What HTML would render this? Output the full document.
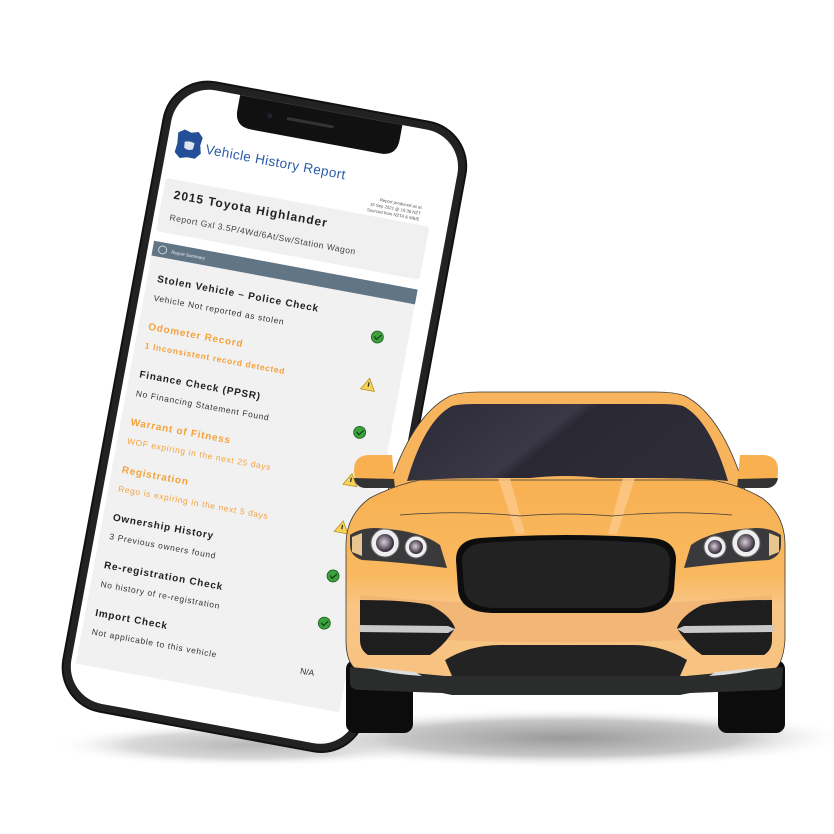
<!DOCTYPE html>
<html><head><meta charset="utf-8"><style>
html,body{margin:0;padding:0;background:#fff;}
svg{display:block;}
text{font-family:"Liberation Sans",Arial,sans-serif;}
</style></head><body>
<svg width="834" height="834" viewBox="0 0 834 834" xmlns="http://www.w3.org/2000/svg">
<defs>
<radialGradient id="sh" cx="0.5" cy="0.5" r="0.5">
<stop offset="0" stop-color="#9a9a9a"/><stop offset="0.6" stop-color="#c8c8c8"/><stop offset="1" stop-color="#fff" stop-opacity="0"/>
</radialGradient>
<linearGradient id="ws" x1="0" y1="0" x2="1" y2="0.3">
<stop offset="0" stop-color="#2b2934"/><stop offset="0.5" stop-color="#3a3846"/><stop offset="0.55" stop-color="#2a2832"/><stop offset="1" stop-color="#2e2c37"/>
</linearGradient>
<linearGradient id="body" x1="0" y1="0" x2="0" y2="1">
<stop offset="0" stop-color="#f8b153"/><stop offset="0.45" stop-color="#f9b85f"/><stop offset="0.6" stop-color="#f8c585"/><stop offset="1" stop-color="#f8c27e"/>
</linearGradient>
<radialGradient id="lens" cx="0.45" cy="0.45" r="0.5">
<stop offset="0" stop-color="#d9cfd6"/><stop offset="0.6" stop-color="#7d7180"/><stop offset="1" stop-color="#3a3540"/>
</radialGradient>
</defs>

<ellipse cx="250" cy="745" rx="200" ry="22" fill="url(#sh)" opacity="0.7"/>
<ellipse cx="565" cy="738" rx="290" ry="30" fill="url(#sh)"/>

<!-- PHONE -->
<g transform="translate(171,73) rotate(10.5)">
<rect x="0" y="0" width="309" height="642" rx="46" fill="#111"/>
<rect x="2" y="2" width="305" height="638" rx="44" fill="#222"/>
<rect x="9" y="9" width="291" height="624" rx="38" fill="#fff"/>
<path d="M72 9 H237 V24 Q237 41 220 41 H89 Q72 41 72 24 Z" fill="#111"/>
<rect x="122" y="22" width="48" height="3" rx="1.5" fill="#333"/>
<circle cx="105" cy="24" r="2.5" fill="#223"/>
<path d="M18 57 L24 53 L31 55 L38 53 L43 58 L42 66 L44 74 L39 80 L31 80 L24 82 L18 77 L19 68 Z" fill="#244f96"/>
<path d="M26 65 Q31 63 36 65 L35.5 71 Q31 74 26.5 71 Z" fill="#fff" opacity="0.85"/>
<text x="48" y="73" font-size="13.5" fill="#2a5ba8" letter-spacing="0.4">Vehicle History Report</text>
<text x="271" y="88" font-size="4.3" fill="#555" text-anchor="end">Report produced as at</text>
<text x="271" y="94" font-size="4.3" fill="#555" text-anchor="end">16 Sep 2021 @ 16:36 NZT</text>
<text x="271" y="100" font-size="4.3" fill="#555" text-anchor="end">Sourced from NZTA &amp; MBIE</text>
<rect x="14" y="104" width="268" height="54" rx="3" fill="#f0f0f1"/>
<text x="25" y="123" font-size="12" font-weight="bold" fill="#222" letter-spacing="1">2015 Toyota Highlander</text>
<text x="25" y="145" font-size="8.6" fill="#444" letter-spacing="0.5">Report Gxl 3.5P/4Wd/6At/Sw/Station Wagon</text>
<rect x="14" y="168" width="268" height="430" fill="#f1f1f2"/>
<rect x="14" y="168" width="268" height="15" fill="#627585"/>
<circle cx="24" cy="175.5" r="4" fill="none" stroke="#dfe5ea" stroke-width="0.8"/>
<text x="33" y="177.5" font-size="4.5" fill="#e8edf1">Report Summary</text>
<g font-size="10" font-weight="bold" letter-spacing="0.8" fill="#222">
<text x="24" y="208">Stolen Vehicle – Police Check</text>
<text x="24" y="256.5" fill="#f5a23a">Odometer Record</text>
<text x="24" y="305">Finance Check (PPSR)</text>
<text x="24" y="353.5" fill="#f5a23a">Warrant of Fitness</text>
<text x="24" y="402" fill="#f5a23a">Registration</text>
<text x="24" y="450.5">Ownership History</text>
<text x="24" y="499">Re-registration Check</text>
<text x="24" y="547.5">Import Check</text>
</g>
<g font-size="8.4" letter-spacing="0.7" fill="#333">
<text x="24" y="227">Vehicle Not reported as stolen</text>
<text x="24" y="275.5" fill="#f5a23a" font-weight="bold">1 Inconsistent record detected</text>
<text x="24" y="324">No Financing Statement Found</text>
<text x="24" y="372.5" fill="#f5a23a">WOF expiring in the next 25 days</text>
<text x="24" y="421" fill="#f5a23a">Rego is expiring in the next 5 days</text>
<text x="24" y="469.5">3 Previous owners found</text>
<text x="24" y="518">No history of re-registration</text>
<text x="24" y="566.5">Not applicable to this vehicle</text>
</g>
<g fill="#3aa13c" stroke="#1d5a1e" stroke-width="0.8">
<circle cx="251" cy="222" r="6"/><circle cx="251" cy="319" r="6"/><circle cx="251" cy="465" r="6"/><circle cx="251" cy="513" r="6"/>
</g>
<g fill="none" stroke="#143d15" stroke-width="1.2">
<path d="M248 222 l2.5 2.5 l4 -5"/><path d="M248 319 l2.5 2.5 l4 -5"/><path d="M248 465 l2.5 2.5 l4 -5"/><path d="M248 513 l2.5 2.5 l4 -5"/>
</g>
<g fill="#f7d35a" stroke="#b89020" stroke-width="0.8">
<path d="M251 264 l7 12 h-14 z"/><path d="M251 361 l7 12 h-14 z"/><path d="M251 409 l7 12 h-14 z"/>
</g>
<g fill="#333"><rect x="250.4" y="268" width="1.3" height="4.5"/><rect x="250.4" y="365" width="1.3" height="4.5"/><rect x="250.4" y="413" width="1.3" height="4.5"/></g>
<text x="236" y="567" font-size="8.5" fill="#333">N/A</text>
</g>

<!-- CAR -->
<rect x="346" y="660" width="67" height="73" rx="9" fill="#0c0c0d"/>
<rect x="718" y="660" width="67" height="73" rx="9" fill="#0c0c0d"/>
<!-- roof -->
<path d="M388 490 Q412 415 450 396 Q460 392 480 392 L655 392 Q675 392 685 396 Q722 415 745 490 Z" fill="#f8b45c" stroke="#3a3a3a" stroke-width="0.8"/>
<path d="M407 481 Q425 420 452 406 Q460 404 475 404 L660 404 Q675 404 683 406 Q710 420 728 481 Q700 478 640 478 L600 478 Q566 474 530 478 L500 478 Q440 478 407 481 Z" fill="url(#ws)"/>
<!-- mirrors -->
<path d="M354 470 Q354 456 368 455 L392 455 L395 488 L365 488 Q354 486 354 470 Z" fill="#f8b050"/>
<path d="M354 478 Q356 488 366 488 L395 488 L394 479 Z" fill="#333"/>
<path d="M778 470 Q778 456 764 455 L740 455 L737 488 L767 488 Q778 486 778 470 Z" fill="#f8b050"/>
<path d="M778 478 Q776 488 766 488 L737 488 L738 479 Z" fill="#333"/>
<!-- body -->
<path d="M370 498 Q395 485 420 480 L712 480 Q740 485 762 498 Q785 515 785 545 L785 640 Q783 668 770 672 L690 690 L445 690 L362 672 Q346 668 346 640 L346 545 Q346 515 370 498 Z" fill="url(#body)" stroke="#3a3a3a" stroke-width="0.8"/>
<path d="M498 478 L510 478 L525 534 L516 534 Z" fill="#fbc98a" opacity="0.8"/>
<path d="M635 478 L623 478 L608 534 L617 534 Z" fill="#fbc98a" opacity="0.8"/>
<path d="M400 515 Q460 510 520 516 Q566 512 612 516 Q672 510 732 515" fill="none" stroke="#3a3a3a" stroke-width="0.7"/>
<path d="M350 535 Q360 528 375 528 Q420 530 440 545 L447 568 Q400 562 362 560 Q350 556 350 545 Z" fill="#3a3a3c"/>
<path d="M352 537 L362 533 L362 556 L352 552 Z" fill="#e8c58f"/>
<circle cx="385" cy="543" r="14" fill="#eee" stroke="#666" stroke-width="1"/>
<circle cx="385" cy="543" r="9" fill="url(#lens)"/>
<circle cx="416" cy="547" r="11" fill="#eee" stroke="#666" stroke-width="1"/>
<circle cx="416" cy="547" r="7" fill="url(#lens)"/>
<path d="M781 535 Q771 528 756 528 Q711 530 691 545 L684 568 Q731 562 769 560 Q781 556 781 545 Z" fill="#3a3a3c"/>
<path d="M779 537 L769 533 L769 556 L779 552 Z" fill="#e8c58f"/>
<circle cx="746" cy="543" r="14" fill="#eee" stroke="#666" stroke-width="1"/>
<circle cx="746" cy="543" r="9" fill="url(#lens)"/>
<circle cx="715" cy="547" r="11" fill="#eee" stroke="#666" stroke-width="1"/>
<circle cx="715" cy="547" r="7" fill="url(#lens)"/>
<path d="M360 595 Q566 615 772 595 L772 635 Q566 650 360 635 Z" fill="#efb070" opacity="0.7"/>
<path d="M456 560 Q456 540 480 538 Q566 532 652 538 Q676 540 676 560 L674 590 Q670 612 640 613 L492 613 Q460 612 458 590 Z" fill="#0d0d0d"/>
<path d="M462 562 Q462 545 483 543 Q566 537 648 543 Q670 545 670 562 L668 588 Q664 607 638 608 L494 608 Q466 607 464 588 Z" fill="#222"/>
<path d="M360 600 Q405 600 430 605 Q450 615 455 628 Q445 645 430 655 L368 655 Q360 650 360 640 Z" fill="#1e1e1e"/>
<path d="M359 625 L448 626 L455 629 L448 633 L359 632 Z" fill="#c9c9c9"/>
<path d="M772 600 Q727 600 702 605 Q682 615 677 628 Q687 645 702 655 L764 655 Q772 650 772 640 Z" fill="#1e1e1e"/>
<path d="M773 625 L684 626 L677 629 L684 633 L773 632 Z" fill="#c9c9c9"/>
<path d="M350 667 L445 676 L686 676 L783 667 L782 685 Q780 690 770 690 L690 693 L680 695 L452 695 L442 693 L362 690 Q350 690 350 683 Z" fill="#2b2c2c"/>
<path d="M445 660 Q470 645 500 645 L632 645 Q662 645 687 660 L680 676 L452 676 Z" fill="#232323"/>
<path d="M365 667 Q390 674 422 676 L415 672 Z" fill="#ddd"/>
<path d="M766 667 Q741 674 709 676 L716 672 Z" fill="#ddd"/>
</svg>
</body></html>
